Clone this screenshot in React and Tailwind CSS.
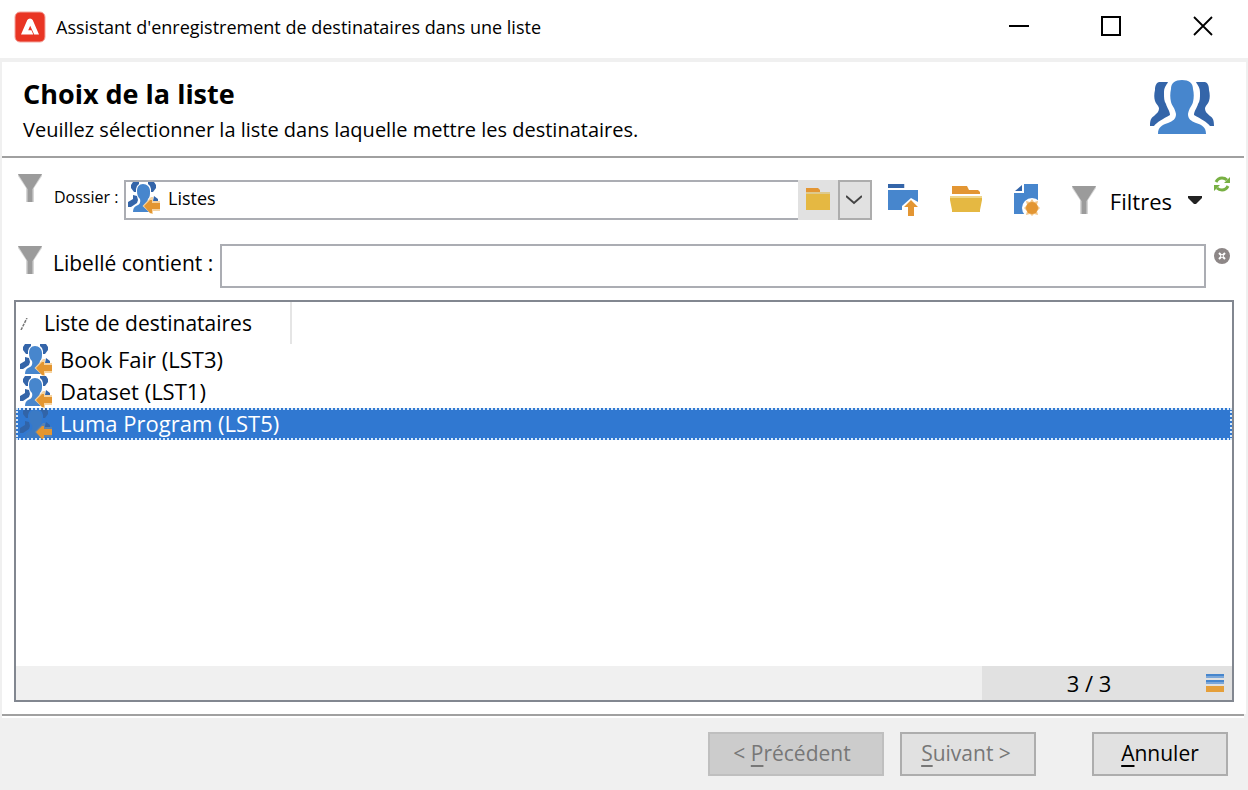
import { useState } from 'react';

const LISTS = ['Book Fair (LST3)', 'Dataset (LST1)', 'Luma Program (LST5)'];

function AppLogo() {
  return (
    <svg className="size-8 shrink-0" viewBox="0 0 32 32" aria-hidden="true">
      <rect x="1" y="1" width="30" height="30" rx="5" fill="#e93524" stroke="#f3a59d" />
      <path d="M7 23.500 13.300 9Q14.200 7.500 16 7.500t2.700 1.500L25 23.500h-4.800L16.200 14.800l-2 4.400h3.200l1.900 4.300z" fill="#fff" />
    </svg>
  );
}

function PeopleIcon() {
  return (
    <svg className="h-[54px] w-16 shrink-0" viewBox="0 0 64 54" aria-hidden="true">
      <path d="M18 2H9C6 3 5 6 5 10c-1 4-1 8 0 11 1 3 3 4 4 7 0 4-2 5-5 8-3 2-4 4-4 10h4c3-4 9-7 16-11 0-4-3-7-4-11-2-3-2-6-2-11 0-6 2-7 4-11z" fill="#3465a9" />
      <path d="M46 2h9c3 1 4 4 4 8 1 4 1 8 0 11-1 3-3 4-4 7 0 4 2 5 5 8 3 2 4 4 4 10h-4c-3-4-9-7-16-11 0-4 3-7 4-11 2-3 2-6 2-11 0-6-2-7-4-11z" fill="#3465a9" />
      <path d="M32 0c-7 0-11 3-11 9-1 4-1 9 0 13 1 4 4 6 5 12 0 5-3 7-8 9-6 2-10 4-10 11h48c0-7-4-9-10-11-5-2-8-4-8-9 1-6 4-8 5-12 1-4 1-9 0-13 0-6-4-9-11-9z" fill="#4786cd" />
    </svg>
  );
}

function ListIcon({ selected }) {
  const side = selected ? '#3164a8' : '#3465a9';
  const body = selected ? '#3b7ac4' : '#4786cd';
  return (
    <svg className="size-8 shrink-0" viewBox="0 0 32 32" aria-hidden="true">
      <path d="M5 0h6v2L9 4 8 7v3H6L3 6V3zM26 0h-6v2l2 2 1 3v3h2l3-4V3zM5 13l4 1 1 4-1 3-6 4H0v-5l5-3zM26 14l4 3v2h-5z" fill={side} />
      <path d="M15 2c-4 0-6 3-6 7 0 4 1 6 3 8 1 4-1 6-4 7-2 1-3 3-3 6h16l1-9c-2-1-3-2-2-4 2-2 2-4 2-8 0-4-3-7-7-7z" fill={body} />
      <path d="M14.500 24 23 15h2v4h7v10h-7v3h-2z" fill={selected ? '#5b82ae' : '#f6d3a0'} />
      <path d="M16 24l6-6h2v3h8v6h-8v4h-2z" fill="#e39631" />
    </svg>
  );
}

function FunnelIcon() {
  return (
    <svg className="h-7 w-6 shrink-0" viewBox="0 0 24 28" aria-hidden="true">
      <path d="M0 0h24v2l-8 12v14H8V14L0 2z" fill="#d6d6d6" />
      <path d="M0 0h24l-8.500 13.500-1 1.500v13h-5V15l-1-1.500z" fill="#9b9b9b" />
    </svg>
  );
}

function FolderIcon() {
  return (
    <svg className="h-[22px] w-6" viewBox="0 0 24 22" aria-hidden="true">
      <path d="M0 0h12l2 2v2H0z" fill="#e39633" />
      <path d="M0 4h24v2H0z" fill="#dec98c" />
      <path d="M0 6h24v16H0z" fill="#e5b842" />
    </svg>
  );
}

function FolderUpIcon() {
  return (
    <svg className="h-8 w-[30px]" viewBox="0 0 30 32" aria-hidden="true">
      <path d="M0 0h16v4H0z" fill="#3465a9" />
      <path d="M16 0h1v4h-1z" fill="#cbd8ea" />
      <path d="M0 6h30v12l-7-4-9 8v4H0z" fill="#4786cd" />
      <path d="M23 16l7 7h-4v9h-6v-9h-4z" fill="#e39633" />
    </svg>
  );
}

function FolderOpenIcon() {
  return (
    <svg className="h-[26px] w-8" viewBox="0 0 32 26" aria-hidden="true">
      <path d="M2 0h15l2 4h9l2 2v2H2z" fill="#e39633" />
      <path d="M0 10h32v4l-2 10v2H2v-2L0 14z" fill="#e5b842" />
      <path d="M0 10h32v2H0z" fill="#efd68c" />
    </svg>
  );
}

function NewListIcon() {
  return (
    <svg className="h-8 w-[26px]" viewBox="0 0 26 32" aria-hidden="true">
      <path d="M10 0h14v30H0V9h10z" fill="#4786cd" />
      <path d="M8 1v6H1z" fill="#3465a9" />
      <circle cx="18" cy="24" r="10" fill="#fff" />
      <path d="M18 15l2 3 4-1-1 4 3 3-3 3 1 4-4-1-2 2-2-2-4 1 1-4-3-3 3-3-1-4 4 1z" fill="#f3c586" />
      <circle cx="18" cy="24" r="6" fill="#e39633" />
    </svg>
  );
}

function RefreshIcon() {
  return (
    <svg className="size-4" viewBox="0 0 16 16" aria-hidden="true">
      <path d="M2 6Q4 2 8 2q3 0 5 2M14 10q-2 4-6 4-3 0-5-2" fill="none" stroke="#78b043" strokeWidth="3" />
      <path d="M16 1v6h-6zM0 15V9h6z" fill="#78b043" />
    </svg>
  );
}

function ClearIcon() {
  return (
    <svg className="size-4" viewBox="0 0 16 16" aria-hidden="true">
      <circle cx="8" cy="8" r="8" fill="#8d8787" />
      <path d="M5 5l6 6M11 5l-6 6" stroke="#fff" strokeWidth="2" />
      <path d="M7 7h2v2H7z" fill="#aaa5a5" />
    </svg>
  );
}

export default function App() {
  const [selected, setSelected] = useState(2);
  const [query, setQuery] = useState('');
  const [folder, setFolder] = useState('Listes');

  return (
    <div className="flex min-h-screen flex-col bg-white font-['Open_Sans','Noto_Sans',sans-serif] text-xl text-black">
      <header className="flex h-[58px] items-center justify-between pr-[34px] pl-[14px]">
        <div className="flex items-center gap-[10px] pb-1">
          <AppLogo />
          <span className="text-lg">Assistant d'enregistrement de destinataires dans une liste</span>
        </div>
        <div className="flex items-center gap-[70px] pb-[6px]">
          <button type="button" aria-label="Réduire">
            <svg className="size-[22px]" viewBox="0 0 22 22"><path d="M1 10h20v2H1z" /></svg>
          </button>
          <button type="button" aria-label="Agrandir">
            <svg className="size-[22px]" viewBox="0 0 22 22"><path d="M2 2h18v18H2z" fill="none" stroke="#000" strokeWidth="2" /></svg>
          </button>
          <button type="button" aria-label="Fermer">
            <svg className="size-[22px]" viewBox="0 0 22 22"><path d="M2 2l18 18M20 2L2 20" stroke="#000" strokeWidth="1.800" /></svg>
          </button>
        </div>
      </header>

      <div className="flex flex-1 flex-col border-x-2 border-t-4 border-[#f0f0f0]">
        <div className="mr-[2px] flex h-24 items-start justify-between border-b-2 border-[#a0a0a0] pt-[18px] pr-[30px] pl-[21px]">
          <div>
            <h1 className="text-[27px] leading-[28px] font-bold">Choix de la liste</h1>
            <p className="pt-2 text-xl leading-7">Veuillez sélectionner la liste dans laquelle mettre les destinataires.</p>
          </div>
          <PeopleIcon />
        </div>

        <main className="flex flex-1 flex-col px-3 pt-4">
          <div className="flex h-[70px] items-start pl-1">
            <FunnelIcon />
            <label htmlFor="folder" className="w-[82px] pt-[6px] pl-3 text-base leading-[34px] whitespace-nowrap">Dossier :</label>
            <div className="mt-[6px] flex h-10 flex-1 border-2 border-r-0 border-[#abadb3] pl-[2px]">
              <ListIcon />
              <input
                id="folder"
                value={folder}
                onChange={(e) => setFolder(e.target.value)}
                className="mb-1 min-w-0 flex-1 pl-2 text-lg outline-none"
              />
            </div>
            <button type="button" aria-label="Parcourir" className="mt-[6px] flex h-10 w-10 items-center justify-center bg-[#e1e1e1] pb-[2px]">
              <FolderIcon />
            </button>
            <button type="button" aria-label="Dérouler" className="mt-[6px] flex h-10 w-[34px] items-center justify-center border-2 border-[#adadad] bg-[#e1e1e1] pr-[2px]">
              <svg className="h-[10px] w-4" viewBox="0 0 16 10"><path d="M0 1l8 7 8-7" fill="none" stroke="#444" strokeWidth="2" /></svg>
            </button>
            <div className="mt-[10px] ml-4 flex items-start gap-8">
              <button type="button" aria-label="Dossier parent"><FolderUpIcon /></button>
              <button type="button" aria-label="Ouvrir le dossier" className="pt-[2px]"><FolderOpenIcon /></button>
              <button type="button" aria-label="Nouvelle liste"><NewListIcon /></button>
              <button type="button" className="flex h-8 items-center gap-[14px]">
                <FunnelIcon />
                <span className="pt-[2px] text-[22px] leading-7">Filtres</span>
                <svg className="ml-[2px] h-2 w-[14px]" viewBox="0 0 14 8"><path d="M0 0h14v2L8 8H6L0 2z" fill="#222" /></svg>
              </button>
            </div>
            <button type="button" aria-label="Actualiser" className="mt-[2px] mr-1 ml-3"><RefreshIcon /></button>
          </div>

          <div className="flex h-14 items-start pt-[2px] pl-1">
            <FunnelIcon />
            <label htmlFor="query" className="w-[178px] pl-[11px] text-[21px] leading-[34px] whitespace-nowrap">Libellé contient :</label>
            <input
              id="query"
              value={query}
              onChange={(e) => setQuery(e.target.value)}
              className="-mt-[2px] h-11 min-w-0 flex-1 border-2 border-[#abadb3] px-2 outline-none"
            />
            <button type="button" aria-label="Effacer" className="mt-[2px] mr-1 ml-2"><ClearIcon /></button>
          </div>

          <section className="flex flex-1 flex-col border-2 border-[#828790]">
            <table className="w-full border-collapse text-[22px]">
              <thead>
                <tr className="h-[42px]">
                  <th scope="col" className="p-0 text-left text-[21px] font-normal">
                    <div className="flex h-[42px] w-[276px] items-center gap-4 border-r-2 border-[#e5e5e5] pt-[2px] pl-1">
                      <svg className="h-3 w-2" viewBox="0 0 8 12" aria-hidden="true"><path d="M1 12L7 0" stroke="#777" strokeWidth="1.500" strokeDasharray="3 1" /></svg>
                      Liste de destinataires
                    </div>
                  </th>
                </tr>
              </thead>
              <tbody>
                {LISTS.map((name, i) => (
                  <tr key={name} aria-selected={i === selected} onClick={() => setSelected(i)} className="h-8">
                    <td className={i === selected ? 'bg-[#3078d1] p-0 text-white outline-2 -outline-offset-2 outline-dotted outline-[#d5e8fa]' : 'p-0'}>
                      <div className="flex h-8 items-center gap-2 overflow-hidden pl-1">
                        <ListIcon selected={i === selected} />
                        <span className="pb-[2px]">{name}</span>
                      </div>
                    </td>
                  </tr>
                ))}
              </tbody>
            </table>
            <div className="mt-auto flex h-[34px] justify-end bg-[#f0f0f0]">
              <div className="flex w-[250px] items-center bg-[#e1e1e1] pr-2">
                <span className="flex-1 pr-[10px] text-center text-[22px]">3 / 3</span>
                <button type="button" aria-label="Configurer la liste">
                  <svg className="h-[18px] w-[18px]" viewBox="0 0 18 18">
                    <path d="M0 0h18v2H0zM0 6h18v2H0z" fill="#4786cd" />
                    <path d="M0 2h18v2H0zM0 8h18v2H0z" fill="#7ba7d9" />
                    <path d="M0 12h18v6H0z" fill="#e59f3a" />
                  </svg>
                </button>
              </div>
            </div>
          </section>
          <div className="h-3" />
        </main>
      </div>

      <footer className="border-x-2 border-[#f0f0f0] bg-[#f0f0f0]">
        <div className="mr-[2px] h-1 border-t-2 border-[#a0a0a0] bg-white" />
        <div className="flex h-[72px] items-start justify-end pt-[14px] pr-[18px] text-[21px]">
          <button type="button" disabled className="mr-4 h-11 w-44 border-2 border-[#bfbfbf] bg-[#cccccc] pr-2 text-[#777]">
            &lt; <u className="underline-offset-4">P</u>récédent
          </button>
          <button type="button" disabled className="mr-14 h-11 w-[136px] border-2 border-[#adadad] bg-[#e1e1e1] pr-1 text-[#777]">
            <u className="underline-offset-4">S</u>uivant &gt;
          </button>
          <button type="button" className="h-11 w-[136px] border-2 border-[#adadad] bg-[#e1e1e1]">
            <u className="underline-offset-4">A</u>nnuler
          </button>
        </div>
      </footer>
    </div>
  );
}
